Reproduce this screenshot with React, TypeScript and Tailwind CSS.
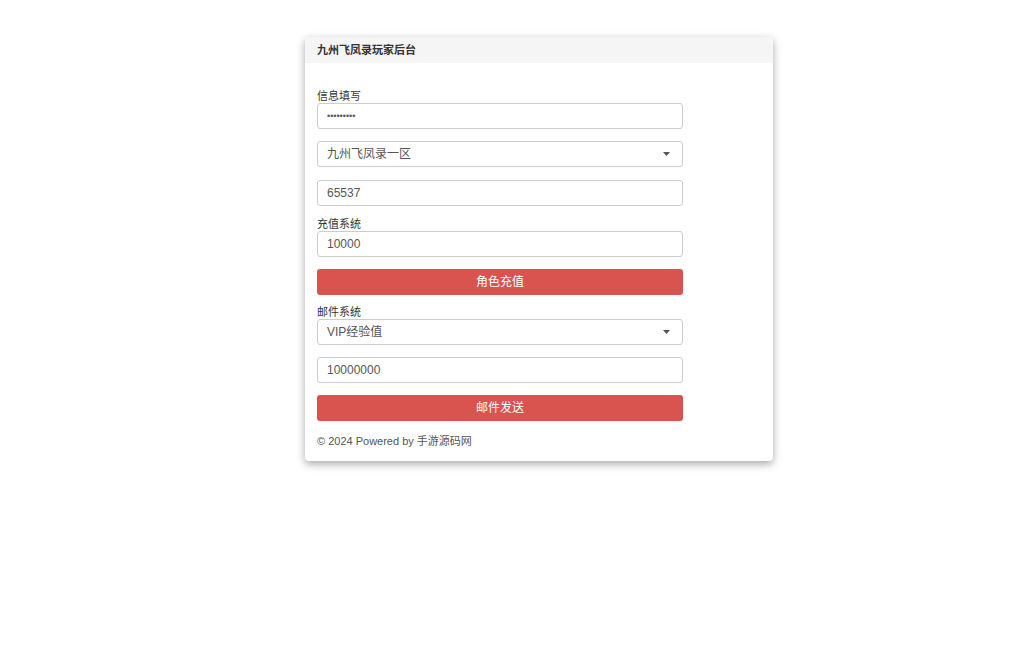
import { useState } from "react";

const font = { fontFamily: '"Liberation Sans", Arial, "Noto Sans CJK SC", sans-serif' };

function Caret() {
  return (
    <svg width="7" height="4" viewBox="0 0 7 4" className="shrink-0">
      <path d="M0 0h7L3.5 4z" fill="#555" />
    </svg>
  );
}

function Field({ value, type = "text", size = "text-[12px]" }: { value: string; type?: string; size?: string }) {
  const [v, setV] = useState(value);
  return (
    <input
      type={type}
      value={v}
      onChange={(e) => setV(e.target.value)}
      className={`block w-[366px] h-[26px] px-[9px] ${size} text-[#555] bg-white border border-[#ccc] rounded-[3px] outline-none`}
    />
  );
}

function Select({ value }: { value: string }) {
  return (
    <div className="flex items-center justify-between w-[366px] h-[26px] pl-[9px] pr-[12px] text-[12px] text-[#555] bg-white border border-[#ccc] rounded-[3px]">
      <span>{value}</span>
      <Caret />
    </div>
  );
}

function RedButton({ text }: { text: string }) {
  return (
    <button className="block w-[366px] h-[26px] text-[12px] text-white bg-[#d9534f] rounded-[3px]">
      {text}
    </button>
  );
}

function Label({ text }: { text: string }) {
  return <div className="h-[13px] leading-[13px] text-[11px] text-[#333]">{text}</div>;
}

export default function App() {
  return (
    <div className="min-h-[655px] bg-white pt-[37px]" style={font}>
      <div className="ml-[305px] w-[468px] bg-white rounded-[4px] shadow-[0_3px_9px_rgba(0,0,0,0.35)] overflow-hidden">
        <div className="h-[26px] bg-[#f5f5f5] px-[12px] flex items-center text-[11px] font-bold text-[#333]">
          九州飞凤录玩家后台
        </div>
        <div className="px-[12px] pt-[27px] pb-[13px]">
          <Label text="信息填写" />
          <Field value="abcdefghi" type="password" size="text-[9px]" />
          <div className="mt-[12px]">
            <Select value="九州飞凤录一区" />
          </div>
          <div className="mt-[13px]">
            <Field value="65537" />
          </div>
          <div className="mt-[12px]">
            <Label text="充值系统" />
            <Field value="10000" />
          </div>
          <div className="mt-[12px]">
            <RedButton text="角色充值" />
          </div>
          <div className="mt-[11px]">
            <Label text="邮件系统" />
            <Select value="VIP经验值" />
          </div>
          <div className="mt-[12px]">
            <Field value="10000000" />
          </div>
          <div className="mt-[12px]">
            <RedButton text="邮件发送" />
          </div>
          <div className="mt-[13px] text-[11px] leading-[14px] text-[#555]">
            © 2024 Powered by 手游源码网
          </div>
        </div>
      </div>
    </div>
  );
}
